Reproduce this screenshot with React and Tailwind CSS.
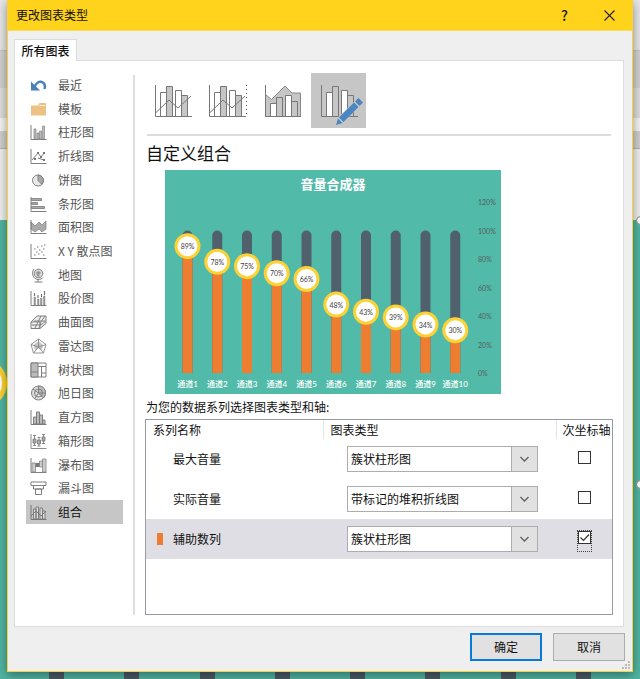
import { useState } from 'react'
import clsx from 'clsx'

const G = '#7f7f7f'
const FILL = '#c6c6c6'

// 17x16 line icons for the category list
const icons = {
  recent: (
    <>
      <path d="M1 4.500v9h9z" fill="#4a7fb8" />
      <path d="M4.500 10C6 6 9 4 12 5c2.500 1 3.500 3.500 2.500 7" fill="none" stroke="#4a7fb8" strokeWidth="2.400" />
    </>
  ),
  template: (
    <>
      <path d="M1 4.500h7L9.500 2H16v12.500H1z" fill="#ebc184" />
      <path d="M9.500 4.500H15" stroke="#fff3df" />
    </>
  ),
  column: (
    <>
      <path d="M1 1v14.500h15.500" stroke={G} fill="none" />
      <path d="M4 5h2v10H4zM7 9h2v6H7zM9.500 7h2v8h-2zM12.500 2h2v13h-2z" fill="#bbb" stroke="#888" strokeWidth=".7" />
    </>
  ),
  line: (
    <>
      <path d="M1 1v14.500h15.500M2 12l6-7 3 4 3-4M8 10l6 2" stroke={G} fill="none" />
      <path d="M7 4h2v2H7zM13 4h2v2h-2zM10 8h2v2h-2zM13 11h2v2h-2zM4 10h2v2H4z" fill="#777" />
    </>
  ),
  pie: (
    <>
      <circle cx="8" cy="8.500" r="5.500" fill="#e8e8e8" stroke={G} />
      <path d="M8 3v5.500l3.800 3.800A5.500 5.500 0 0 0 8 3z" fill="#aaa" stroke={G} />
    </>
  ),
  bar: (
    <>
      <path d="M1 1v14.500h15.500" stroke={G} fill="none" />
      <path d="M1.500 2.500h10v2h-10zM1.500 6.500h6v2h-6zM1.500 10.500h13v2h-13z" fill="#aaa" stroke="#777" strokeWidth=".8" />
    </>
  ),
  area: (
    <>
      <path d="M1 3l4 4 4-4 3 3 4-4v8l-4 3-3-3-4 3-4-3z" fill="#aaa" stroke="#888" strokeWidth=".8" />
      <path d="M1 1v13.500h15.500" stroke={G} fill="none" />
    </>
  ),
  scatter: (
    <>
      <path d="M1 1v14.500h15.500" stroke={G} fill="none" />
      <path d="M4 6h1.500M7 4h1.500M11 3h1.500M14 2h1.500M6 9h1.500M9 7h1.500M13 6h1.500M4 12h1.500M8 11h1.500M11 9h1.500M13 12h1.500" stroke="#777" />
    </>
  ),
  map: (
    <>
      <circle cx="8.500" cy="6.500" r="4.300" fill="#ddd" stroke={G} />
      <path d="M6 5l3-1 2 2-2 2 1 2-3-1z" fill="#999" />
      <path d="M4 2C1 6 3 12 8 12.500c2 0 4-.5 5-2M8 12.500V15M4.500 15h8" stroke={G} fill="none" />
    </>
  ),
  stock: (
    <>
      <path d="M1 1v14.500h15.500" stroke={G} fill="none" />
      <path d="M4 7h1.500v8H4zM7.500 9H9v6H7.500zM10.500 8H12v7h-1.500zM13.500 6H15v9h-1.500z" fill="#999" stroke="#888" strokeWidth=".5" />
      <path d="M4.500 3v3M8 5v3M11.500 4v3M14.500 1v4" stroke="#777" strokeWidth="1.200" />
    </>
  ),
  surface: (
    <path d="M1 8v6.500h9l6-5V2H7zM2 11h9l5-4M4 7h11M5 14l3-6 3-6M9 14l2-6 4-6M1 8h9v6" fill="#eee" stroke={G} />
  ),
  radar: (
    <>
      <path d="M8.500 3l4.500 4-1 5-3.500-1.500L5 12 3.500 7z" fill="#c4c4c4" />
      <path d="M8.500 1L16 6.500 13.500 15h-10L1 6.500zM8.500 1v8M1 6.500L8.500 9 16 6.500M3.500 15l5-6 5 6" fill="none" stroke="#888" strokeWidth=".9" />
    </>
  ),
  treemap: (
    <>
      <path d="M1 1h15v14H1z" fill="#fff" stroke={G} />
      <path d="M1 1h7v14H1z" fill="#bbb" stroke={G} />
      <path d="M1 10h7M8 4.500h8M11.500 4.500V15M11.500 11H16" stroke={G} fill="none" />
    </>
  ),
  sunburst: (
    <>
      <circle cx="8.500" cy="8" r="7" fill="#ddd" stroke={G} />
      <path d="M8.500 1a7 7 0 0 1 5 12L8.500 8z" fill="#bbb" stroke={G} />
      <circle cx="8.500" cy="8" r="4" fill="none" stroke={G} />
      <path d="M8.500 8L3 4M8.500 8l-4 6M8.500 8h7" stroke={G} />
    </>
  ),
  histogram: (
    <>
      <path d="M1 1v14.500h15.500" stroke={G} fill="none" />
      <path d="M3.500 8h3v7h-3zM6.500 3h3v12h-3zM9.500 6h3v9h-3zM12.500 11h2.500v4h-2.500z" fill="#bbb" stroke="#777" strokeWidth=".9" />
    </>
  ),
  box: (
    <>
      <path d="M1 1v14.500h15.500M4.500 2v11M9 4v9M13.500 1v10M3 2.500h3M3 12.500h3M7.500 4.500h3M7.500 13h3M12 1.500h3M12 10.500h3" stroke={G} fill="none" strokeWidth=".9" />
      <path d="M3 6h3v4H3zM7.500 7h3v4h-3zM12 4h3v4h-3z" fill="#aaa" stroke="#777" strokeWidth=".8" />
    </>
  ),
  waterfall: (
    <>
      <path d="M1 1v14.500h15.500" stroke={G} fill="none" />
      <path d="M2 6h3.500v9H2zM9.500 4h3v6h-3zM12.500 2h3.500v13h-3.500z" fill="#ccc" stroke="#888" strokeWidth=".8" />
      <path d="M5.500 6h4v4h-4z" fill="#777" />
    </>
  ),
  funnel: <path d="M1 2h15v3.500H1zM3.500 5.500h10v3.500h-10zM5.500 9h6v5.500h-6z" fill="#fff" stroke={G} />,
  combo: (
    <>
      <path d="M1 1v14.500h15.500" stroke="#777" fill="none" />
      <path d="M3.500 5h2.500v10H3.500zM6 3h2.500v12H6zM10 4h2.500v11H10zM12.500 7H15v8h-2.500z" fill="#ddd" stroke="#777" strokeWidth=".9" />
      <path d="M1 12l5-5 5 5 5-5" stroke="#777" fill="none" />
    </>
  ),
}

const categories = [
  ['recent', '最近'],
  ['template', '模板'],
  ['column', '柱形图'],
  ['line', '折线图'],
  ['pie', '饼图'],
  ['bar', '条形图'],
  ['area', '面积图'],
  ['scatter', 'X Y 散点图'],
  ['map', '地图'],
  ['stock', '股价图'],
  ['surface', '曲面图'],
  ['radar', '雷达图'],
  ['treemap', '树状图'],
  ['sunburst', '旭日图'],
  ['histogram', '直方图'],
  ['box', '箱形图'],
  ['waterfall', '瀑布图'],
  ['funnel', '漏斗图'],
  ['combo', '组合'],
]

const Bars = () => (
  <>
    <path d="M5.500 31.500v-24h6v24M20.500 31.500v-26h6v26" fill="#fff" stroke="#777" />
    <path d="M11.500 31.500v-30h6v30M26.500 31.500v-21h6v21" fill={FILL} stroke="#777" />
    <path d="M.5 0v31.500H37" fill="none" stroke="#777" />
  </>
)

const subtypes = [
  {
    id: 'cluster-line',
    name: '簇状柱形图 - 折线图',
    art: (
      <g transform="translate(-1 0)">
        <Bars />
        <path d="M.5 28L14 15l9 8L36 11" fill="none" stroke="#777" />
      </g>
    ),
  },
  {
    id: 'cluster-line-secondary',
    name: '簇状柱形图 - 次坐标轴上的折线图',
    art: (
      <g transform="translate(-2 0)">
        <Bars />
        <path d="M.5 28L14 15l9 8L36 11" fill="none" stroke="#777" />
        <path d="M37.500 0v32" stroke="#555" strokeDasharray="1 3" />
      </g>
    ),
  },
  {
    id: 'area-cluster',
    name: '堆积面积图 - 簇状柱形图',
    art: (
      <g transform="translate(-1 0)">
        <path d="M.5 9.500l6 5L20 1l7 7h8.500v23.500H.5z" fill={FILL} stroke="#888" />
        <path d="M5.500 31.500v-13h6v13M20.500 31.500v-21h6v21" fill="#fff" stroke="#777" />
        <path d="M11.500 31.500v-19h6v19M26.500 31.500v-15h6v15" fill={FILL} stroke="#777" />
        <path d="M.5 0v31.500H36" fill="none" stroke="#777" />
      </g>
    ),
  },
  {
    id: 'custom',
    name: '自定义组合',
    art: (
      <>
        <Bars />
        <path d="M14 41l2.500-8L38 12l5 5-21 20.500z" fill={FILL} />
        <path d="M15 40l2-6.500 4.500 4.500zM18 32.500L33 17.500l4.500 4.500-15 15zM34 16.500l3.500-3.500 4.500 4.500-3.500 3.500z" fill="#4a86c2" />
      </>
    ),
  },
]

const volumes = [89, 78, 75, 70, 66, 48, 43, 39, 34, 30]
const ticks = [0, 20, 40, 60, 80, 100, 120]

const BASE = 203
const y = (v) => BASE - v * 1.425
const x = (i) => 22.5 + i * 29.75

function VolumeChart() {
  return (
    <svg viewBox="0 0 336 224" className="block w-[336px] h-[224px] bg-[#52baa8] font-['Lato','Noto_Sans_CJK_SC',sans-serif]">
      <text x="168" y="19" textAnchor="middle" fontSize="13" fontWeight="700" fill="#fff">音量合成器</text>
      {ticks.map((t) => (
        <text key={t} x="313" y={y(t) + 3} fontSize="7" fill="#55605f">{t}%</text>
      ))}
      {volumes.map((v, i) => (
        <g key={i}>
          <path d={`M${x(i) - 5} ${BASE}V${y(100) + 5}a5 5 0 0 1 10 0V${BASE}z`} fill="#50616d" />
          <rect x={x(i) - 5} y={y(v)} width="10" height={BASE - y(v)} fill="#ed7d31" />
          <circle cx={x(i)} cy={y(v)} r="11.500" fill="#fff" stroke="#fdd235" strokeWidth="3" />
          <text x={x(i)} y={y(v) + 3} textAnchor="middle" fontSize="7" fill="#404040">{v}%</text>
          <text x={x(i)} y="217" textAnchor="middle" fontSize="8" fontWeight="500" fill="#fff">通道{i + 1}</text>
        </g>
      ))}
    </svg>
  )
}

const chartTypes = ['簇状柱形图', '带标记的堆积折线图']

function SeriesRow({ series, onChange }) {
  const { name, type, secondary, color, active } = series
  return (
    <tr className={clsx('h-10', active && 'bg-[#dfdee4]')}>
      <td>
        <div className="flex items-center pl-[11px]">
          <span className={clsx('w-1.5 h-3 mr-2.5', color === 'orange' && 'bg-[#ed7d31]')} />
          {name}
        </div>
      </td>
      <td>
        <div className="relative w-[191px] ml-6">
          <select
            aria-label={`${name} 图表类型`}
            value={type}
            onChange={(e) => onChange({ type: e.target.value })}
            className="appearance-none block w-full h-[26px] pl-[3px] pr-7 bg-white border border-[#abadb3] outline-none"
          >
            {chartTypes.map((t) => <option key={t}>{t}</option>)}
          </select>
          <span className="absolute right-0 top-0 w-[27px] h-[26px] flex items-center justify-center bg-[#e1e1e1] border border-[#adadad] pointer-events-none">
            <svg width="9" height="6" viewBox="0 0 9 6" fill="none" stroke="#606060" strokeWidth="1.300"><path d="M.5 1l4 4 4-4" /></svg>
          </span>
        </div>
      </td>
      <td>
        <div className="flex justify-center pb-1">
          <label className={clsx('relative block', active && 'h-5 -mb-2 outline-1 outline-dotted outline-[#444]')}>
            <input
              type="checkbox"
              aria-label={`${name} 次坐标轴`}
              checked={secondary}
              onChange={(e) => onChange({ secondary: e.target.checked })}
              className="appearance-none block size-[13px] bg-white border border-[#333]"
            />
            {secondary && (
              <svg className="absolute left-0 top-0 pointer-events-none" width="13" height="13" fill="none" stroke="#333" strokeWidth="1.200">
                <path d="M2.500 6.500l3 3 5.500-6" />
              </svg>
            )}
          </label>
        </div>
      </td>
    </tr>
  )
}

function Backdrop() {
  return (
    <div aria-hidden="true" className="absolute inset-0 flex flex-col overflow-hidden">
      <div className="h-[50px] bg-[#e6e6e6]" />
      <div className="h-[38px] bg-[#d2d2d2] border-t border-[#c4c4c4]" />
      <div className="h-[30px] bg-[#dedede]" />
      <div className="h-[13px] bg-[#f4f4f4]" />
      <div className="h-[18px] bg-[#cfcfcf] border-b border-[#b4b4b4]" />
      <div className="h-[71px] bg-[#f0f0f0]" />
      <div className="relative flex-1 flex justify-between px-[49px] bg-[#50b5a3]">
        {[0, 1, 2, 3, 4, 5, 6, 7].map((i) => (
          <div key={i} className="w-[15px] bg-[#4b5a68]" />
        ))}
        <div className="absolute -left-[43px] top-[138px] size-[50px] rounded-full bg-white border-5 border-[#fdd235]" />
        <div className="absolute -right-[5px] -top-1 size-[9px] rounded-full bg-white border border-[#888]" />
        <div className="absolute -right-[5px] top-[260px] size-[9px] rounded-full bg-white border border-[#888]" />
      </div>
    </div>
  )
}

export default function App() {
  const [category, setCategory] = useState('combo')
  const [subtype, setSubtype] = useState('custom')
  const [series, setSeries] = useState([
    { name: '最大音量', type: '簇状柱形图', secondary: false },
    { name: '实际音量', type: '带标记的堆积折线图', secondary: false },
    { name: '辅助数列', type: '簇状柱形图', secondary: true, color: 'orange', active: true },
  ])

  const update = (i, patch) => setSeries(series.map((s, n) => (n === i ? { ...s, ...patch } : s)))

  return (
    <div className="relative min-h-screen px-[7px] pb-[7px] overflow-hidden text-xs text-[#111] font-['Noto_Sans_CJK_SC',sans-serif]">
      <Backdrop />

      <div role="dialog" aria-labelledby="title" className="relative bg-[#efefef] border border-t-0 border-[#f5d13c] shadow-[0_3px_10px_rgba(0,0,0,0.4)]">
        <header className="flex items-center h-[31px] pl-2 bg-[#ffd21c] border-b border-[#fbdc5e]">
          <h1 id="title" className="flex-1">更改图表类型</h1>
          <button type="button" aria-label="帮助" className="w-[45px] h-full text-sm font-medium">?</button>
          <button type="button" aria-label="关闭" className="w-[45px] h-full flex items-center justify-center">
            <svg width="11" height="11" stroke="#222" strokeWidth="1.100"><path d="M.5.5l10 10M10.500.5l-10 10" /></svg>
          </button>
        </header>

        <main className="px-1.5 pt-2">
          <button type="button" className="relative z-10 block w-[63px] h-[22px] -mb-px bg-white border border-b-0 border-[#dcdcdc] font-medium">
            所有图表
          </button>

          <section className="flex mr-0.5 pt-3 pb-[11px] pl-[11px] pr-2.5 bg-white border border-[#dcdcdc]">
            <nav className="w-[97px] h-[451px] flex flex-col text-[#555]">
              {categories.map(([id, label]) => (
                <button
                  key={id}
                  type="button"
                  onClick={() => setCategory(id)}
                  className={clsx('flex-1 flex items-center gap-[11px] pl-1', category === id && 'bg-[#c6c6c6] text-[#111]')}
                >
                  <svg width="17" height="16" viewBox="0 0 17 16">{icons[id]}</svg>
                  {label}
                </button>
              ))}
            </nav>
            <div className="w-0.5 mt-0.5 mx-2.5 bg-[#dedede]" />

            <div className="flex-1">
              <div className="flex pl-px">
                {subtypes.map(({ id, name, art }) => (
                  <button
                    key={id}
                    type="button"
                    aria-label={name}
                    onClick={() => setSubtype(id)}
                    className={clsx('size-[55px] pl-2.5 pt-3', subtype === id && 'bg-[#c6c6c6]')}
                  >
                    <svg width="45" height="43" viewBox="0 0 45 43" className="overflow-visible">{art}</svg>
                  </button>
                ))}
              </div>
              <div className="h-0.5 mt-1.5 mx-0.5 bg-[#dcdcdc]" />
              <h2 className="mt-[5px] pl-px text-[17px] leading-6">自定义组合</h2>
              <div className="mt-[5px] pl-5">
                <VolumeChart />
              </div>
              <p className="mt-[5px] pl-px leading-4">为您的数据系列选择图表类型和轴:</p>

              <div className="mt-1 min-h-[196px] bg-white border border-[#9799a3]">
                <table className="w-full table-fixed border-collapse">
                  <colgroup>
                    <col className="w-[177px]" />
                    <col className="w-[233px]" />
                    <col />
                  </colgroup>
                  <thead>
                    <tr className="h-[19px] text-left leading-4">
                      <th className="pl-[7px] font-normal border-r border-[#e3e3e3]">系列名称</th>
                      <th className="pl-[7px] font-normal border-r border-[#e3e3e3]">图表类型</th>
                      <th className="pl-1.5 font-normal whitespace-nowrap">次坐标轴</th>
                    </tr>
                  </thead>
                  <tbody>
                    {series.map((s, i) => (
                      <SeriesRow key={s.name} series={s} onChange={(patch) => update(i, patch)} />
                    ))}
                  </tbody>
                </table>
              </div>
            </div>
          </section>
        </main>

        <footer className="relative flex justify-end gap-[11px] pt-1.5 pb-2.5 pr-[7px]">
          <button type="button" className="w-[72px] h-7 bg-[#e1e1e1] border-2 border-[#0a7ad8]">确定</button>
          <button type="button" className="w-[72px] h-7 bg-[#e1e1e1] border border-[#adadad]">取消</button>
          <svg className="absolute right-0.5 bottom-0.5" width="8" height="8" fill="#bdbdbd">
            <path d="M6 0h2v2H6zM3 3h2v2H3zM6 3h2v2H6zM0 6h2v2H0zM3 6h2v2H3zM6 6h2v2H6z" />
          </svg>
        </footer>
      </div>
    </div>
  )
}
